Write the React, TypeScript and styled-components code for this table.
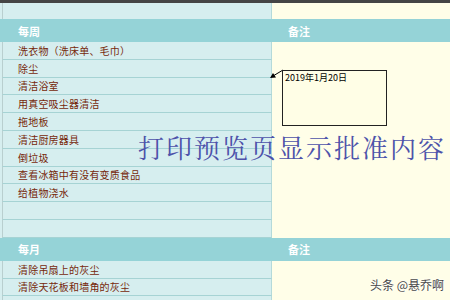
import React from "react";
import styled, { createGlobalStyle } from "styled-components";

/**
 * Global
 */

const GlobalStyle = createGlobalStyle`
  html, body {
    margin: 0;
    padding: 0;
    background: #d6eeef;
  }
  body {
    width: 450px;
    height: 300px;
    overflow: hidden;
    font-family: "Noto Sans CJK SC", "Liberation Sans", sans-serif;
  }
`;

const cyan = "#d6eeef";
const cream = "#fffee8";
const rule = "#a6d3d4";
const band = "#95d3d7";

/**
 * Styled Component
 */

const Sheet = styled.div`
  position: relative;
  width: 450px;
  height: 300px;
  overflow: hidden;
  background: ${cyan};
`;

const TopBar = styled.div`
  height: 3px;
  background: #454545;
`;

const Grid = styled.div`
  display: grid;
  grid-template-columns: 272px 178px;
`;

const LeftCell = styled.div<{ $h: number; $line?: boolean }>`
  height: ${(p) => p.$h}px;
  box-sizing: border-box;
  margin-left: 2px;
  border-left: 1px solid #b9cfcf;
  border-right: 1px solid #b4dada;
  border-bottom: ${(p) => (p.$line ? `1px solid ${rule}` : "none")};
  padding-left: 15px;
  display: flex;
  align-items: center;
  font-size: 10px;
  letter-spacing: 0.2px;
  color: #76280a;
  white-space: nowrap;
`;

const RightColumn = styled.div`
  background: ${cream};
`;

const HeaderBand = styled.div`
  display: grid;
  grid-template-columns: 272px 178px;
  height: 23px;
  background: ${band};
  align-items: center;
  color: #fff;
  font-size: 11px;
  font-weight: bold;
`;

const HeaderLabel = styled.span<{ $pad: number }>`
  padding-left: ${(p) => p.$pad}px;
`;

const Comment = styled.div`
  position: absolute;
  left: 282px;
  top: 70px;
  width: 105px;
  height: 56px;
  box-sizing: border-box;
  border: 1px solid #222;
  background: #fffee6;
  padding: 1px 0 0 2px;
  font-size: 9px;
  color: #000;
  line-height: 11px;
`;

const Arrow = styled.svg`
  position: absolute;
  left: 269px;
  top: 68px;
`;

const Stamp = styled.div`
  position: absolute;
  left: 138px;
  top: 128px;
  font-family: "Noto Serif CJK SC", "AR PL UKai CN", "Noto Sans CJK SC", serif;
  font-size: 26px;
  letter-spacing: 2px;
  color: #4d52aa;
  white-space: nowrap;
`;

const Watermark = styled.div`
  position: absolute;
  left: 370px;
  top: 276px;
  font-size: 12px;
  color: #4a4a4a;
  text-shadow: 0 0 2px #fff, 0 0 2px #fff;
  white-space: nowrap;
`;

/**
 * Data
 */

const weekly = [
  "洗衣物（洗床单、毛巾）",
  "除尘",
  "清洁浴室",
  "用真空吸尘器清洁",
  "拖地板",
  "清洁厨房器具",
  "倒垃圾",
  "查看冰箱中有没有变质食品",
  "给植物浇水",
  "",
  "",
];

const monthly = ["清除吊扇上的灰尘", "清除天花板和墙角的灰尘", ""];

const rowH = 17.8;

const Section = ({ title, rows }: { title: string; rows: string[] }) => (
  <>
    <HeaderBand>
      <HeaderLabel $pad={18}>{title}</HeaderLabel>
      <HeaderLabel $pad={16}>备注</HeaderLabel>
    </HeaderBand>
    <Grid>
      <div>
        {rows.map((r, i) => (
          <LeftCell key={i} $h={rowH} $line>
            {r}
          </LeftCell>
        ))}
      </div>
      <RightColumn />
    </Grid>
  </>
);

/**
 * Template
 */

export default function App() {
  return (
    <>
      <GlobalStyle />
      <Sheet>
        <TopBar />
        <Grid>
          <LeftCell $h={16} />
          <RightColumn />
        </Grid>
        <Section title="每周" rows={weekly} />
        <Section title="每月" rows={monthly} />

        <Arrow width="16" height="12" viewBox="0 0 16 12">
          <line x1="14" y1="2" x2="4" y2="8" stroke="#000" strokeWidth="1" />
          <polygon points="1,10 7,9.5 4,5" fill="#000" />
        </Arrow>
        <Comment>2019年1月20日</Comment>

        <Stamp>打印预览页显示批准内容</Stamp>
        <Watermark>头条 @悬乔啊</Watermark>
      </Sheet>
    </>
  );
}
